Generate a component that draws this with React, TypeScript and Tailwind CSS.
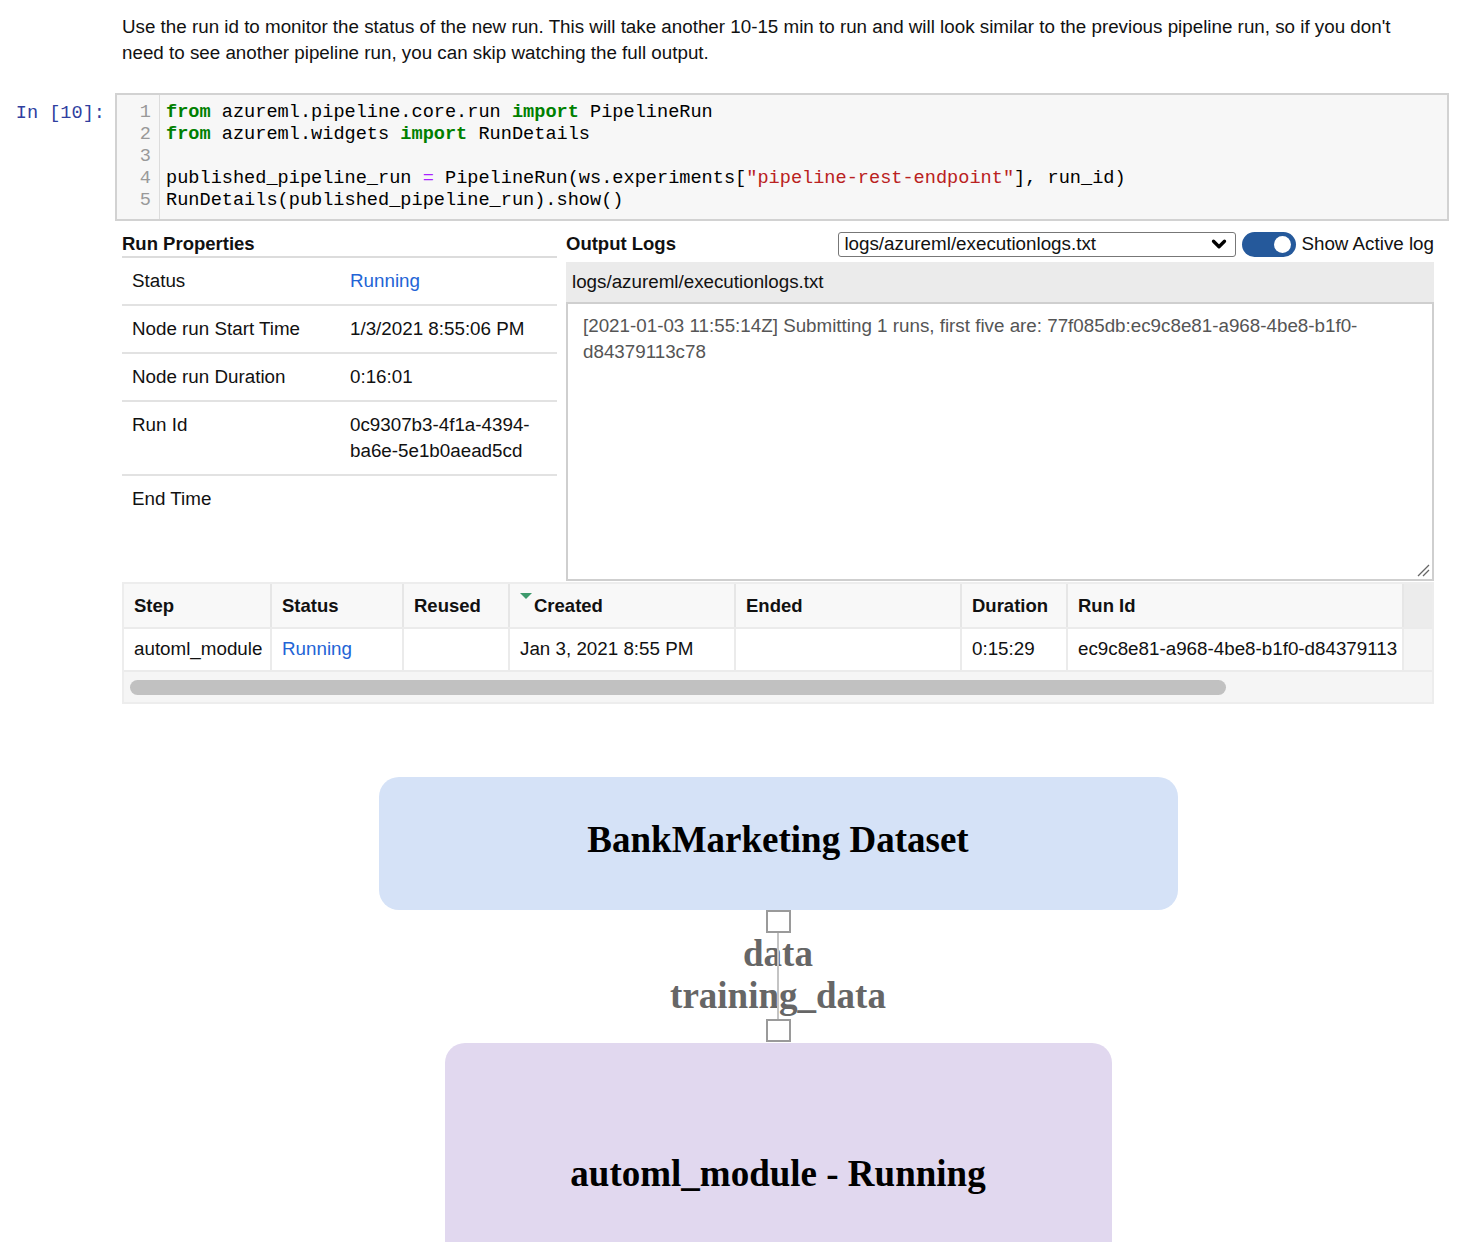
import { ChevronDown } from "lucide-react";

const sans = "font-['Liberation_Sans',Arial,sans-serif]";
const mono = "font-['Liberation_Mono','Courier_New',monospace]";
const serif = "font-['Liberation_Serif','Times_New_Roman',serif]";

function CodeLine({ children }: { children?: React.ReactNode }) {
  return <div className="h-[22px] whitespace-pre">{children}</div>;
}

function CodeCell() {
  const kw = "text-[#008000] font-bold";
  return (
    <div className="flex mt-[27px]">
      <div className={`${mono} w-[115px] shrink-0 pt-[10px] pr-[10px] text-right text-[18.6px] leading-[22px] text-[#303f9f]`}>
        In&nbsp;[10]:
      </div>
      <div className={`${mono} flex flex-1 border-2 border-[#d2d2d2] bg-[#f7f7f7] text-[18.6px] leading-[22px] text-black`}>
        <div className="w-[43px] shrink-0 border-r border-[#dcdcdc] pt-[7px] pb-[7px] pr-[8px] text-right text-[#999]">
          {[1, 2, 3, 4, 5].map((n) => (
            <div key={n} className="h-[22px]">{n}</div>
          ))}
        </div>
        <div className="pl-[6px] pt-[7px] pb-[7px]">
          <CodeLine>
            <span className={kw}>from</span> azureml.pipeline.core.run <span className={kw}>import</span> PipelineRun
          </CodeLine>
          <CodeLine>
            <span className={kw}>from</span> azureml.widgets <span className={kw}>import</span> RunDetails
          </CodeLine>
          <CodeLine> </CodeLine>
          <CodeLine>
            published_pipeline_run <span className="text-[#aa22ff]">=</span> PipelineRun(ws.experiments[
            <span className="text-[#ba2121]">"pipeline-rest-endpoint"</span>], run_id)
          </CodeLine>
          <CodeLine>RunDetails(published_pipeline_run).show()</CodeLine>
        </div>
      </div>
    </div>
  );
}

function PropRow({ label, value, blue, grow }: { label: string; value?: React.ReactNode; blue?: boolean; grow?: boolean }) {
  return (
    <div className={`flex px-[10px] py-[10px] leading-[26px] ${grow ? "flex-1" : "border-b-2 border-[#e2e2e2]"}`}>
      <div className="w-[218px] shrink-0">{label}</div>
      <div className={blue ? "text-[#2364d6]" : ""}>{value}</div>
    </div>
  );
}

function RunProperties() {
  return (
    <div className="flex w-[435px] shrink-0 flex-col">
      <div className="flex h-[27px] items-center border-b-2 border-[#dcdcdc] text-[18.5px] font-bold">Run Properties</div>
      <PropRow label="Status" value="Running" blue />
      <PropRow label="Node run Start Time" value="1/3/2021 8:55:06 PM" />
      <PropRow label="Node run Duration" value="0:16:01" />
      <PropRow
        label="Run Id"
        value={
          <>
            0c9307b3-4f1a-4394-
            <br />
            ba6e-5e1b0aead5cd
          </>
        }
      />
      <PropRow label="End Time" grow />
    </div>
  );
}

function OutputLogs() {
  return (
    <div className="flex flex-1 flex-col">
      <div className="flex h-[26px] items-center">
        <div className="flex-1 text-[18.5px] font-bold">Output Logs</div>
        <div className="flex h-[25px] w-[398px] items-center justify-between rounded-[3px] border border-[#777] pl-[5px] pr-[5px]">
          <span>logs/azureml/executionlogs.txt</span>
          <ChevronDown size={22} strokeWidth={3.6} className="text-black" />
        </div>
        <div className="ml-[6px] flex h-[25px] w-[54px] items-center justify-end rounded-full bg-[#25599b] pr-[5px]">
          <div className="h-[17px] w-[17px] rounded-full bg-white" />
        </div>
        <div className="ml-[5px]">Show Active log</div>
      </div>
      <div className="mt-[5px] flex h-[40px] items-center bg-[#ebebeb] px-[6px]">logs/azureml/executionlogs.txt</div>
      <div className="relative h-[279px] border-2 border-[#cfcfcf] bg-white px-[15px] pt-[9px] leading-[26px] text-[#555]">
        [2021-01-03 11:55:14Z] Submitting 1 runs, first five are: 77f085db:ec9c8e81-a968-4be8-b1f0-
        <br />
        d84379113c78
        <svg className="absolute bottom-[2px] right-[2px]" width="14" height="14" viewBox="0 0 14 14">
          <path d="M2 13 L13 2 M7 13 L13 7" stroke="#666" strokeWidth="1.3" />
        </svg>
      </div>
    </div>
  );
}

const cols = [
  { name: "Step", w: "w-[148px]", v: "automl_module" },
  { name: "Status", w: "w-[132px]", v: "Running", blue: true },
  { name: "Reused", w: "w-[106px]", v: "" },
  { name: "Created", w: "w-[226px]", v: "Jan 3, 2021 8:55 PM", sort: true },
  { name: "Ended", w: "w-[226px]", v: "" },
  { name: "Duration", w: "w-[106px]", v: "0:15:29" },
  { name: "Run Id", w: "w-[336px]", v: "ec9c8e81-a968-4be8-b1f0-d84379113" },
];

function StepsTable() {
  return (
    <div className="mt-[1px] border-2 border-[#ededed] bg-[#f5f5f5]">
      <div className="flex h-[43px] bg-[#ececec]">
        {cols.map((c) => (
          <div
            key={c.name}
            className={`${c.w} relative flex shrink-0 items-center border-r-2 border-[#e6e6e6] bg-[#f8f8f8] px-[10px] text-[18.5px] font-bold`}
          >
            {c.sort && (
              <span className="mr-[2px] mb-[20px] inline-block h-0 w-0 border-x-[6px] border-t-[6px] border-x-transparent border-t-[#3d9a6c]" />
            )}
            {c.name}
          </div>
        ))}
      </div>
      <div className="flex h-[45px] border-y-2 border-[#ebebeb]">
        {cols.map((c) => (
          <div
            key={c.name}
            className={`${c.w} flex shrink-0 items-center overflow-hidden whitespace-nowrap border-r-2 border-[#ebebeb] bg-white px-[10px] ${c.blue ? "text-[#2364d6]" : ""}`}
          >
            {c.v}
          </div>
        ))}
      </div>
      <div className="flex h-[30px] items-center px-[6px] pt-[1px]">
        <div className="h-[15px] w-[1096px] rounded-full bg-[#c1c1c1]" />
      </div>
    </div>
  );
}

function Port() {
  return <div className="h-[23px] w-[25px] border-2 border-[#9a9a9a] bg-white" />;
}

function PipelineGraph() {
  return (
    <div className={`${serif} mt-[73px] flex flex-col items-center font-bold`}>
      <div className="flex h-[133px] w-[799px] items-center justify-center rounded-[20px] bg-[#d5e2f7] pb-[7px] text-[37px] text-black">
        BankMarketing Dataset
      </div>
      <Port />
      <div className="relative flex h-[86px] flex-col items-center text-[37px] leading-[42px] text-[#666]">
        <div>data</div>
        <div>training_data</div>
        <div className="absolute left-1/2 top-0 h-full w-[2px] -translate-x-1/2 bg-[#c4c4c4]" />
      </div>
      <Port />
      <div className="mt-[1px] h-[260px] w-[667px] rounded-t-[20px] bg-[#e1d8ef] pt-[109px] text-center text-[37px] leading-[44px] text-black">
        automl_module - Running
      </div>
    </div>
  );
}

export default function App() {
  return (
    <div className={`${sans} h-[1242px] w-[1464px] overflow-hidden bg-white text-[18.8px] text-[#111]`}>
      <div className="pl-[122px] pt-[14px] leading-[26px]">
        Use the run id to monitor the status of the new run. This will take another 10-15 min to run and will look similar to the previous pipeline run, so if you don't
        <br />
        need to see another pipeline run, you can skip watching the full output.
      </div>
      <div className="pr-[15px]">
        <CodeCell />
      </div>
      <div className="ml-[122px] mr-[30px] mt-[10px]">
        <div className="flex gap-[9px]">
          <RunProperties />
          <OutputLogs />
        </div>
        <StepsTable />
        <PipelineGraph />
      </div>
    </div>
  );
}
